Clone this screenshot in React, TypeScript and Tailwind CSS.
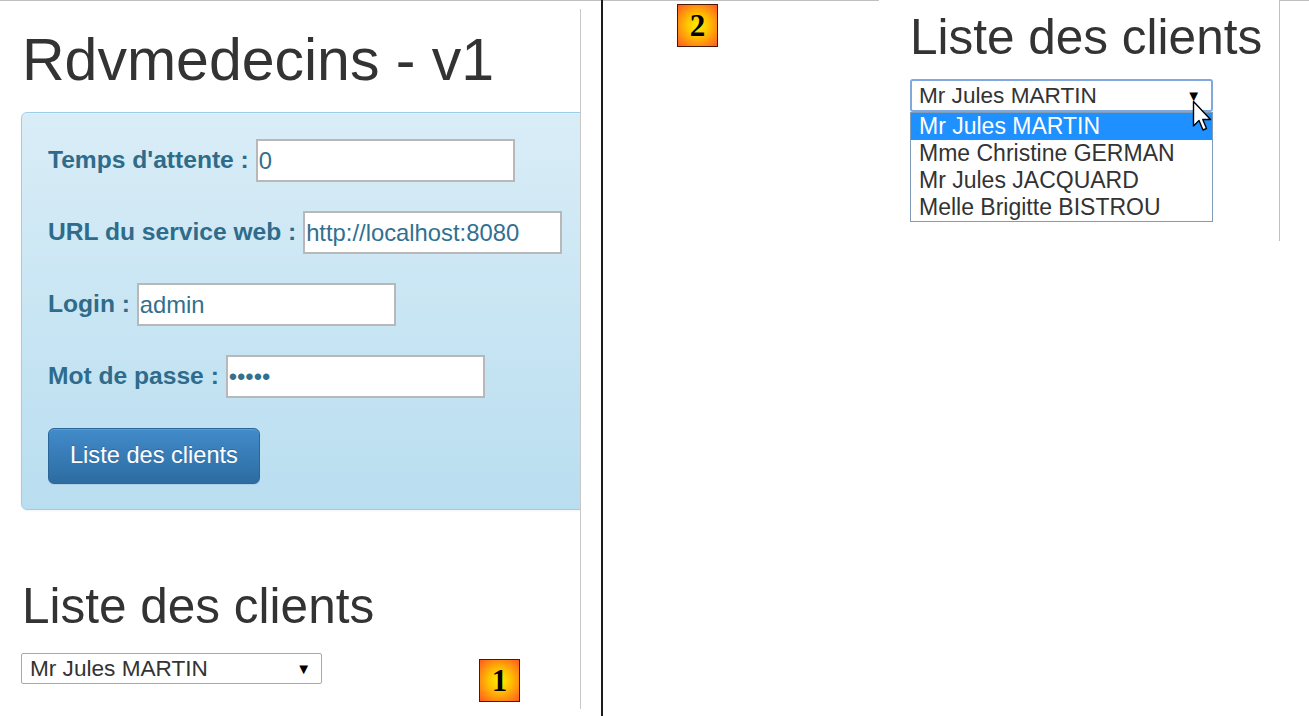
import React from "react";

function Badge({ n }: { n: string }) {
  return (
    <div className="w-[41px] h-[43px] border border-[#4a1a08] bg-[radial-gradient(circle,#fff200_0%,#ffc000_40%,#ff5a22_100%)] flex items-center justify-center shrink-0">
      <span className="font-['Liberation_Serif',serif] font-bold text-[31px] leading-none text-black">{n}</span>
    </div>
  );
}

function Row({ label, value, type = "text" }: { label: string; value: string; type?: string }) {
  return (
    <div className="flex items-center h-[43px]">
      <label className="font-bold text-[24.6px] text-[#2f6b8a] whitespace-pre">{label + " "}</label>
      <input
        type={type}
        readOnly
        value={value}
        className="h-[43px] w-[259px] bg-white border-2 border-[#b8b8b8] px-[1px] text-[23.8px] text-[#31708f] outline-none font-['Liberation_Sans',Arial,sans-serif]"
      />
    </div>
  );
}

export default function App() {
  return (
    <div className="w-[1309px] h-[716px] flex bg-white overflow-hidden font-['Liberation_Sans',Arial,sans-serif] text-[#333]">
      {/* Left screenshot */}
      <div className="w-[601px] h-full border-t border-[#c0c0c0] flex shrink-0">
        <div className="w-[581px] mt-[8px] mb-[7px] border-r border-[#c8c8c8] overflow-hidden pl-[21px] flex flex-col">
          <h1 className="text-[59px] leading-[65px] font-normal mt-[19px] pl-[1px]">Rdvmedecins - v1</h1>
          <div className="mt-[19px] w-[600px] shrink-0 rounded-[6px] border border-[#9acfea] bg-[linear-gradient(to_bottom,#d9edf7_0%,#b9def0_100%)] shadow-[inset_0_1px_0_rgba(255,255,255,0.25),0_1px_2px_rgba(0,0,0,0.05)] pl-[26px] pt-[26px] pb-[25px] flex flex-col gap-[29px]">
            <Row label="Temps d'attente :" value="0" />
            <Row label="URL du service web :" value="http://localhost:8080" />
            <Row label="Login :" value="admin" />
            <Row label="Mot de passe :" value="admin" type="password" />
            <div className="mt-[1px]">
              <button className="h-[56px] px-[21px] rounded-[6px] border border-[#2b669a] bg-[linear-gradient(to_bottom,#428bca_0%,#2d6ca2_100%)] text-white text-[23.6px] shadow-[inset_0_1px_0_rgba(255,255,255,0.15),0_1px_1px_rgba(0,0,0,0.075)] [text-shadow:0_-1px_0_rgba(0,0,0,0.2)]">
                Liste des clients
              </button>
            </div>
          </div>
          <h2 className="text-[49.5px] leading-[54px] font-normal mt-[69px] pl-[1px]">Liste des clients</h2>
          <div className="flex items-start mt-[20px]">
            <div className="w-[301px] h-[31px] border border-[#a9a9a9] rounded-[2px] flex items-center justify-between pl-[8px] pr-[10px] shrink-0">
              <span className="text-[22.6px] text-[#333]">Mr Jules MARTIN</span>
              <span className="text-[15px] leading-none text-black">▼</span>
            </div>
            <div className="ml-[157px] mt-[6px]">
              <Badge n="1" />
            </div>
          </div>
        </div>
      </div>

      {/* black divider */}
      <div className="w-[2px] h-full bg-[#1c1c1c] shrink-0" />

      {/* Right area */}
      <div className="flex-1 flex">
        <div className="w-[276px] border-t border-[#c0c0c0] shrink-0 pl-[74px] pt-[3px]">
          <Badge n="2" />
        </div>
        <div className="w-[401px] h-[241px] border-r border-[#c0c0c0] shrink-0 relative pl-[31px] flex flex-col">
          <h2 className="text-[49.5px] leading-[54px] font-normal mt-[10px]">Liste des clients</h2>
          <div className="mt-[15px] w-[303px] h-[33px] border-2 border-[#80a8dc] rounded-[3px] flex items-center justify-between pl-[7px] pr-[10px] shrink-0">
            <span className="text-[22.6px] text-[#333]">Mr Jules MARTIN</span>
            <span className="text-[15px] leading-none text-black">▼</span>
          </div>
          <div className="w-[303px] border border-[#7f9db9] bg-white flex flex-col shrink-0">
            <div className="h-[27px] bg-[#1e90ff] text-white text-[23px] leading-[27px] pl-[8px]">Mr Jules MARTIN</div>
            <div className="h-[27px] text-[#333] text-[23px] leading-[27px] pl-[8px]">Mme Christine GERMAN</div>
            <div className="h-[27px] text-[#333] text-[23px] leading-[27px] pl-[8px]">Mr Jules JACQUARD</div>
            <div className="h-[27px] text-[#333] text-[23px] leading-[27px] pl-[8px]">Melle Brigitte BISTROU</div>
          </div>
          <svg className="absolute left-[313px] top-[100px]" width="21" height="33" viewBox="0 0 21 33">
            <path d="M1.5 1.5 L1.5 26 L7 20.5 L11 30 L14.5 28.5 L10.8 19.5 L18.5 19.5 Z" fill="white" stroke="black" strokeWidth="1.4" strokeLinejoin="round" />
          </svg>
        </div>
        <div className="flex-1 border-t border-[#c0c0c0]" />
      </div>
    </div>
  );
}
